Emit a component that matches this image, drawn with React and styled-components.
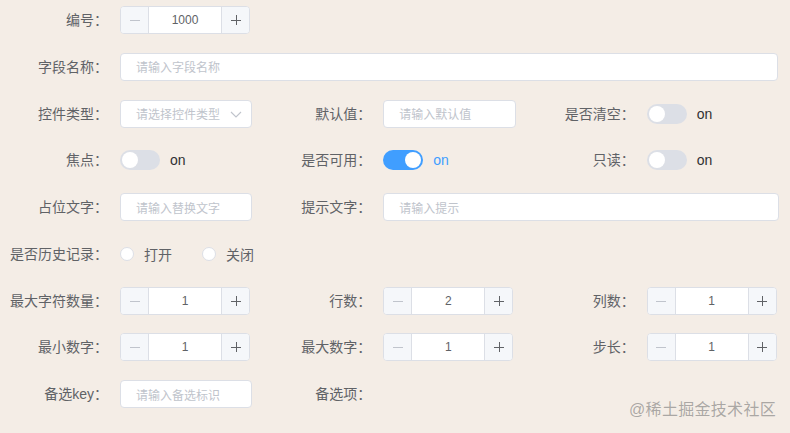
import React from "react";
import styled, { createGlobalStyle } from "styled-components";

const Global = createGlobalStyle`
  html, body { margin: 0; padding: 0; background: #f4ede6; }
  body { font-family: "Liberation Sans", "Noto Sans CJK SC", sans-serif; }
  * { box-sizing: border-box; }
`;

const Page = styled.div`
  position: relative;
  width: 790px;
  height: 433px;
  background: #f4ede6;
  padding-top: 6px;
`;

const Form = styled.div`
  display: grid;
  grid-template-columns: repeat(3, 1fr);
  row-gap: 18.75px;
`;

const Item = styled.div`
  grid-column: span ${(p) => p.span || 1};
  display: flex;
  align-items: center;
  height: 28px;
  padding-right: ${(p) => (p.span === 3 ? 12 : 11)}px;
`;

const Label = styled.label`
  flex: 0 0 120px;
  padding-right: 12px;
  text-align: right;
  font-size: 14px;
  color: #606266;
  line-height: 28px;
  white-space: nowrap;
`;

const Content = styled.div`
  flex: 1;
  min-width: 0;
  display: flex;
  align-items: center;
  height: 28px;
`;

const TextInput = styled.div`
  width: 100%;
  height: 28px;
  border: 1px solid #dcdfe6;
  border-radius: 4px;
  background: #fff;
  display: flex;
  align-items: center;
  padding: 0 15px;
  font-size: 12px;
  color: #c0c4cc;
  white-space: nowrap;
  overflow: hidden;
`;

const SelectBox = styled(TextInput)`
  justify-content: space-between;
  padding-right: 9px;
`;

const Stepper = styled.div`
  width: 130px;
  height: 28px;
  display: flex;
  border: 1px solid #dcdfe6;
  border-radius: 4px;
  overflow: hidden;
  background: #fff;
`;

const StepBtn = styled.div`
  flex: 0 0 28px;
  display: flex;
  align-items: center;
  justify-content: center;
  background: #f5f7fa;
  color: ${(p) => (p.disabled ? "#c0c4cc" : "#606266")};
  ${(p) => (p.side === "left" ? "border-right: 1px solid #dcdfe6;" : "border-left: 1px solid #dcdfe6;")}
`;

const StepValue = styled.div`
  flex: 1;
  display: flex;
  align-items: center;
  justify-content: center;
  font-size: 12px;
  color: #606266;
`;

const SwitchTrack = styled.span`
  position: relative;
  width: 40px;
  height: 20px;
  border-radius: 10px;
  background: ${(p) => (p.on ? "#409eff" : "#dcdfe6")};
  flex: 0 0 40px;
  &::after {
    content: "";
    position: absolute;
    top: 2px;
    left: ${(p) => (p.on ? "22px" : "2px")};
    width: 16px;
    height: 16px;
    border-radius: 50%;
    background: #fff;
  }
`;

const SwitchText = styled.span`
  margin-left: 10px;
  font-size: 14px;
  color: ${(p) => (p.on ? "#409eff" : "#303133")};
`;

const Radio = styled.span`
  display: inline-flex;
  align-items: center;
  margin-right: 30px;
  font-size: 14px;
  color: #606266;
`;

const RadioDot = styled.span`
  width: 14px;
  height: 14px;
  border-radius: 50%;
  border: 1px solid #dcdfe6;
  background: #fff;
  margin-right: 10px;
`;

const Watermark = styled.div`
  position: absolute;
  right: 14px;
  bottom: 13px;
  font-size: 16px;
  color: rgba(120, 120, 120, 0.6);
  letter-spacing: 0.3px;
`;

const Minus = () => (
  <svg width="10" height="10" viewBox="0 0 10 10">
    <path d="M0 5.5h10" stroke="currentColor" strokeWidth="1" />
  </svg>
);
const Plus = () => (
  <svg width="10" height="10" viewBox="0 0 10 10">
    <path d="M0 5.5h10M5.5 0v10" stroke="currentColor" strokeWidth="1" />
  </svg>
);
const Chevron = () => (
  <svg width="12" height="12" viewBox="0 0 12 12">
    <path d="M1 4l5 5 5-5" fill="none" stroke="#c0c4cc" strokeWidth="1.1" />
  </svg>
);

const NumberInput = ({ value }) => (
  <Stepper>
    <StepBtn side="left" disabled>
      <Minus />
    </StepBtn>
    <StepValue>{value}</StepValue>
    <StepBtn side="right">
      <Plus />
    </StepBtn>
  </Stepper>
);

const Switch = ({ on }) => (
  <>
    <SwitchTrack on={on ? 1 : 0} />
    <SwitchText on={on ? 1 : 0}>on</SwitchText>
  </>
);

const Field = ({ label, span, children }) => (
  <Item span={span}>
    <Label>{label}</Label>
    <Content>{children}</Content>
  </Item>
);

export default function App() {
  return (
    <Page>
      <Global />
      <Form>
        <Field label="编号：" span={3}>
          <NumberInput value="1000" />
        </Field>
        <Field label="字段名称：" span={3}>
          <TextInput>请输入字段名称</TextInput>
        </Field>
        <Field label="控件类型：">
          <SelectBox>
            <span>请选择控件类型</span>
            <Chevron />
          </SelectBox>
        </Field>
        <Field label="默认值：">
          <TextInput>请输入默认值</TextInput>
        </Field>
        <Field label="是否清空：">
          <Switch />
        </Field>
        <Field label="焦点：">
          <Switch />
        </Field>
        <Field label="是否可用：">
          <Switch on />
        </Field>
        <Field label="只读：">
          <Switch />
        </Field>
        <Field label="占位文字：">
          <TextInput>请输入替换文字</TextInput>
        </Field>
        <Field label="提示文字：" span={2}>
          <TextInput>请输入提示</TextInput>
        </Field>
        <Field label="是否历史记录：" span={3}>
          <Radio>
            <RadioDot />
            打开
          </Radio>
          <Radio>
            <RadioDot />
            关闭
          </Radio>
        </Field>
        <Field label="最大字符数量：">
          <NumberInput value="1" />
        </Field>
        <Field label="行数：">
          <NumberInput value="2" />
        </Field>
        <Field label="列数：">
          <NumberInput value="1" />
        </Field>
        <Field label="最小数字：">
          <NumberInput value="1" />
        </Field>
        <Field label="最大数字：">
          <NumberInput value="1" />
        </Field>
        <Field label="步长：">
          <NumberInput value="1" />
        </Field>
        <Field label="备选key：">
          <TextInput>请输入备选标识</TextInput>
        </Field>
        <Field label="备选项：" span={2} />
      </Form>
      <Watermark>@稀土掘金技术社区</Watermark>
    </Page>
  );
}
